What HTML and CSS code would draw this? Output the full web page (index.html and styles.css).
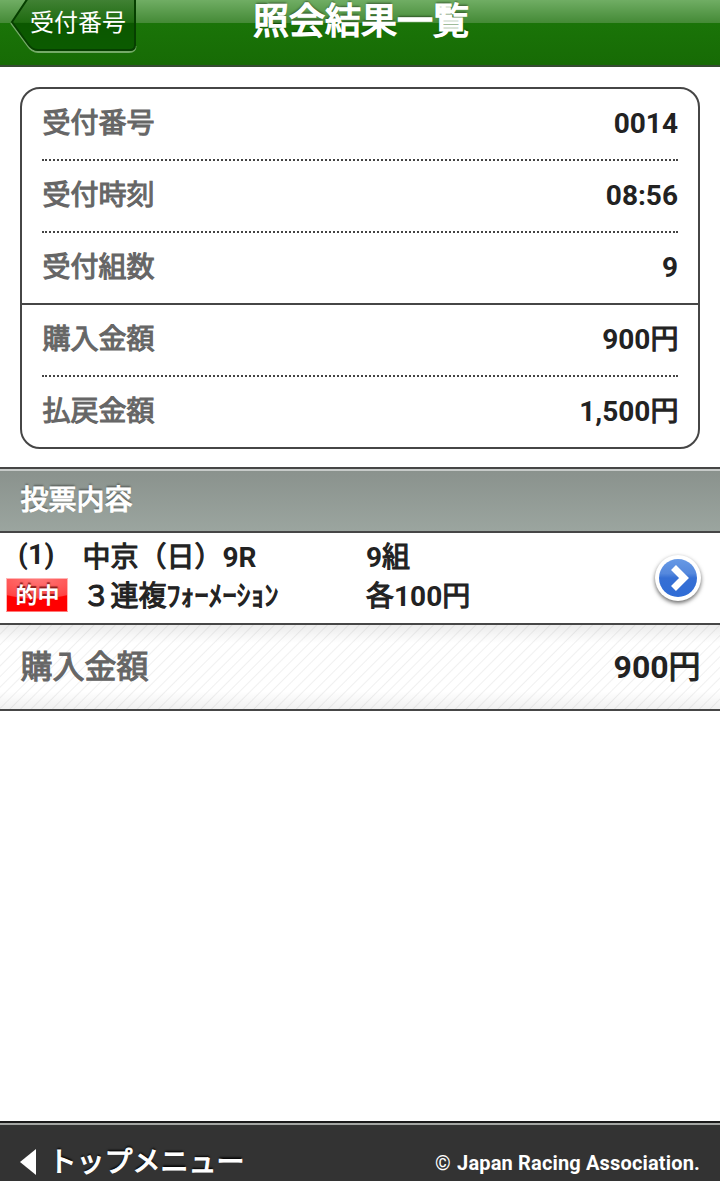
FILE: index.html
```html
<!DOCTYPE html>
<html lang="ja">
<head>
<meta charset="utf-8">
<title>照会結果一覧</title>
<link rel="stylesheet" href="styles.css">
</head>
<body>
<div class="page">
  <header class="topbar">
    <a class="back">
      <svg class="back-shape" width="128" height="54" viewBox="0 0 128 54">
        <defs>
          <linearGradient id="backFill" x1="0" y1="0" x2="0" y2="1">
            <stop offset="0" stop-color="#438337"/>
            <stop offset=".47" stop-color="#1f6b10"/>
            <stop offset=".48" stop-color="#0b5700"/>
            <stop offset="1" stop-color="#0b5b00"/>
          </linearGradient>
        </defs>
        <path d="M1 23L18 46Q22 52 28 52H119Q125.500 52 125.500 46" fill="none" stroke="#75aa68" stroke-width="2"/>
        <path d="M18-2L2 22L18 44Q22 50 28 50H120Q125 50 125 45V-2Z" fill="url(#backFill)" stroke="#063f00" stroke-width="2"/>
      </svg>
      <span class="back-text">受付番号</span>
    </a>
    <h1 class="title">照会結果一覧</h1>
  </header>
  <main class="content">
    <dl class="card">
      <div class="row"><dt class="label">受付番号</dt><dd class="value">0014</dd></div>
      <div class="row"><dt class="label">受付時刻</dt><dd class="value">08:56</dd></div>
      <div class="row last"><dt class="label">受付組数</dt><dd class="value">9</dd></div>
      <div class="row split"><dt class="label">購入金額</dt><dd class="value yen">900<span class="jp">円</span></dd></div>
      <div class="row last"><dt class="label">払戻金額</dt><dd class="value yen">1,500<span class="jp">円</span></dd></div>
    </dl>
    <h2 class="section">投票内容</h2>
    <div class="bet">
      <div class="bet-no"><span class="num">(1)</span><span class="hit">的中</span></div>
      <div class="bet-name"><div class="line"><span class="jp">中京（日）</span>9R</div><div class="line"><span class="jp">３連複ﾌｫｰﾒｰｼｮﾝ</span></div></div>
      <div class="bet-count"><div class="line">9<span class="jp">組</span></div><div class="line"><span class="jp">各</span>100<span class="jp">円</span></div></div>
      <svg class="go" width="60" height="60" viewBox="0 0 60 60">
        <defs>
          <linearGradient id="goFill" x1="0" y1="0" x2="0" y2="1">
            <stop offset="0" stop-color="#6799e5"/>
            <stop offset=".38" stop-color="#5588dd"/>
            <stop offset=".5" stop-color="#366fd4"/>
            <stop offset="1" stop-color="#2f6cd6"/>
          </linearGradient>
        </defs>
        <circle class="go-rim" cx="30" cy="30" r="23" fill="#fff"/>
        <circle cx="30" cy="30" r="19" fill="url(#goFill)"/>
        <path d="M25.500 19.500L36 30L25.500 40.500" fill="none" stroke="#fff" stroke-width="7"/>
      </svg>
    </div>
    <div class="total"><span class="label">購入金額</span><span class="total-value">900<span class="jp">円</span></span></div>
  </main>
  <footer class="footer">
    <a class="top-link"><svg width="17" height="26" viewBox="0 0 17 26"><path d="M0 13L16 0V26Z" fill="#fff"/></svg><span class="top-text">トップメニュー</span></a>
    <span class="copy"><span class="mark">©</span> Japan Racing Association.</span>
  </footer>
</div>
</body>
</html>
```
FILE: styles.css
```css
* { box-sizing: border-box; }
body { margin: 0; background: #fff; color: #222; font: 700 28px/40px Roboto, "Noto Sans CJK JP", sans-serif; }
.page { height: 1181px; display: flex; flex-direction: column; overflow: hidden; }
.jp, .label, .title, .section, .top-text { font-family: "Noto Sans CJK JP", sans-serif; font-weight: 400; -webkit-text-stroke: 1.1px currentColor; }
.topbar { height: 67px; flex: none; display: grid; grid-template-columns: 252px 1fr 252px; border-bottom: 2px solid #364b32; background: linear-gradient(#70ad64 0, #448a36 23px, #1a7408 23px, #176b05 65px) padding-box; }
.back { display: grid; padding-left: 10px; }
.back-shape, .back-text { grid-area: 1 / 1; }
.back-text { padding-left: 20px; color: #fff; font: 400 24px/42px "Noto Sans CJK JP", sans-serif; white-space: nowrap; }
.title { margin: 0; text-align: center; color: #fff; font-size: 36px; line-height: 37px; text-indent: 1px; text-shadow: 0 -2px 2px rgba(0,0,0,.4); white-space: nowrap; -webkit-text-stroke-width: 1.5px; }
.content { flex: 1; padding-top: 20px; }
.card { margin: 0 20px 18px; border: 2px solid #464646; border-radius: 20px; }
.row { display: flex; justify-content: space-between; height: 72px; margin: 0 20px; border-bottom: 2px dotted #444; }
.row.last { height: 70px; border-bottom: 0; }
.row.split { margin: 0; padding: 0 20px; height: 74px; border-top: 2px solid #464646; border-bottom: 0; position: relative; }
.row.split::after { content: ""; position: absolute; left: 20px; right: 20px; bottom: 0; border-bottom: 2px dotted #444; }
.label { color: #666; line-height: 64px; text-indent: .6px; }
.value { margin: 0; line-height: 69px; }
.value.yen { line-height: 65px; margin-right: -.4px; }
.section { height: 66px; margin: 0; padding-left: 20.6px; border-top: 2px solid #464646; border-bottom: 2px solid #464646; background: linear-gradient(#c7cbc9 0 2px, #8a928d 2px, #9ba59f) padding-box; color: #fff; font-size: 28px; line-height: 58px; text-shadow: 0 -2px 2px rgba(0,0,0,.4); }
.bet { height: 92px; display: grid; grid-template-columns: 82.5px 283.5px 282px 60px; border-bottom: 2px solid #464646; }
.bet-no { display: flex; flex-direction: column; padding: 2px 0 0 6px; }
.num { padding-left: 12px; letter-spacing: .3px; }
.hit { width: 62px; height: 34px; margin-top: 3px; border: 1px solid #ffb5b5; border-bottom-color: #ff7777; background: radial-gradient(ellipse 55px 20px at 30px 0, #ff7777, #f44 95%, #f00 100%); color: #fff; font: 700 22px/29px "Noto Sans CJK JP", sans-serif; text-align: center; text-indent: 1px; text-shadow: 0 -2px 1px rgba(90,0,0,.7); }
.bet-name, .bet-count { padding-top: 2px; white-space: nowrap; }
.line { height: 39px; }
.go { margin-top: 15px; overflow: visible; }
.go-rim { filter: drop-shadow(0 2px 2px rgba(0,0,0,.6)); }
.total { height: 86px; padding: 0 19.4px 0 20px; display: flex; justify-content: space-between; border-bottom: 2px solid #464646; background: linear-gradient(rgba(0,0,0,.08), transparent 18px, transparent 66px, rgba(0,0,0,.06)) padding-box, repeating-linear-gradient(135deg, #fff 0 5.5px, #f0f0f0 6.5px, #fff 7.5px); font-size: 32px; }
.total .label { line-height: 78px; }
.total-value { line-height: 78px; }
.footer { height: 60px; flex: none; display: flex; justify-content: space-between; padding: 0 20px; border-top: 2px solid #1a1a1a; background: linear-gradient(#a3a5a3 0 2px, #333 2px) padding-box; color: #fff; }
.top-link { display: flex; gap: 12px; }
.top-link svg { margin-top: 26px; }
.top-text { line-height: 74px; text-indent: -.5px; text-shadow: 0 -2px 2px #000; }
.copy { font-size: 20px; line-height: 81px; letter-spacing: .16px; }
.mark { font-weight: 400; margin-right: 1px; }
```
